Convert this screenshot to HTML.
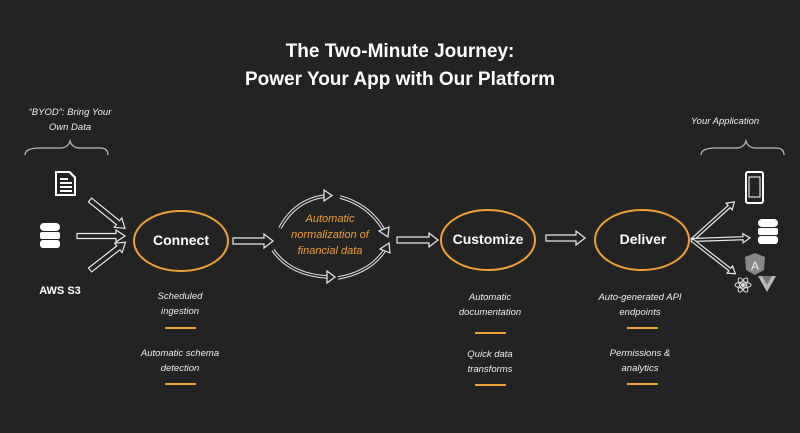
<!DOCTYPE html>
<html><head><meta charset="utf-8"><style>
html,body{margin:0;padding:0;background:#232323;}
body{width:800px;height:433px;position:relative;overflow:hidden;font-family:"Liberation Sans",sans-serif;color:#fff;}
.t{position:absolute;text-align:center;}
.title{left:0;width:800px;font-weight:bold;font-size:19px;line-height:28px;}
.lab{font-style:italic;font-size:9.5px;line-height:15px;color:#eee;}
.node{font-weight:bold;font-size:14px;}
.bar{position:absolute;height:2px;background:#f0a030;width:31px;}
</style></head><body>
<div class="t title" style="top:38px">The Two-Minute Journey:</div>
<div class="t title" style="top:66px">Power Your App with Our Platform</div>

<div class="t lab" style="left:10px;width:120px;top:105px">“BYOD”: Bring Your<br>Own Data</div>
<div class="t lab" style="left:660px;width:130px;top:114px">Your Application</div>
<div class="t" style="left:20px;width:80px;top:285px;font-weight:bold;font-size:11px">AWS S3</div>

<div class="t node" style="left:133px;width:96px;top:232px">Connect</div>
<div class="t node" style="left:440px;width:96px;top:231px">Customize</div>
<div class="t node" style="left:595px;width:96px;top:231px">Deliver</div>
<div class="t lab" style="left:280px;width:100px;top:211px;color:#f0a030;font-size:11px;line-height:16px">Automatic<br>normalization of<br>financial data</div>

<div class="t lab" style="left:130px;width:100px;top:289px">Scheduled<br>ingestion</div>
<div class="bar" style="left:165px;top:327px"></div>
<div class="t lab" style="left:120px;width:120px;top:346px">Automatic schema<br>detection</div>
<div class="bar" style="left:165px;top:383px"></div>
<div class="t lab" style="left:440px;width:100px;top:290px">Automatic<br>documentation</div>
<div class="bar" style="left:475px;top:332px"></div>
<div class="t lab" style="left:440px;width:100px;top:347px">Quick data<br>transforms</div>
<div class="bar" style="left:475px;top:384px"></div>
<div class="t lab" style="left:580px;width:120px;top:290px">Auto-generated API<br>endpoints</div>
<div class="bar" style="left:627px;top:327px"></div>
<div class="t lab" style="left:580px;width:120px;top:346px">Permissions &amp;<br>analytics</div>
<div class="bar" style="left:627px;top:383px"></div>

<svg width="800" height="433" style="position:absolute;left:0;top:0" fill="none" stroke="#ddd">
<defs>
<path id="a" d="M0,-2.5 L1,-2.5" />
</defs>
<!-- braces -->
<path d="M25,155 Q25,148 40,148 L60,148 Q68,148 70,141 Q72,148 80,148 L100,148 Q108,148 108,155" stroke="#bbb" stroke-width="1.3"/>
<path d="M701,155 Q701,148 716,148 L736,148 Q744,148 746,141 Q748,148 756,148 L776,148 Q784,148 784,155" stroke="#bbb" stroke-width="1.3"/>
<!-- ellipses -->
<ellipse cx="181" cy="241" rx="47" ry="30" stroke="#f0a030" stroke-width="2"/>
<ellipse cx="488" cy="240" rx="47" ry="30" stroke="#f0a030" stroke-width="2"/>
<ellipse cx="642" cy="240" rx="47" ry="30" stroke="#f0a030" stroke-width="2"/>
<g stroke="#e8e8e8" stroke-width="1.2" fill="#232323">
<!-- straight block arrows: shaft len L -->
<g transform="translate(90,200) rotate(39)"><path d="M0,-2.5 L36,-2.5 L36,-6 L45,0 L36,6 L36,2.5 L0,2.5Z"/></g>
<g transform="translate(77,236)"><path d="M0,-2.5 L39,-2.5 L39,-6 L48,0 L39,6 L39,2.5 L0,2.5Z"/></g>
<g transform="translate(90,270) rotate(-38)"><path d="M0,-2.5 L36,-2.5 L36,-6 L45,0 L36,6 L36,2.5 L0,2.5Z"/></g>
<g transform="translate(233,241)"><path d="M0,-3 L31,-3 L31,-7 L40,0 L31,7 L31,3 L0,3Z"/></g>
<g transform="translate(397,240)"><path d="M0,-3 L32,-3 L32,-7 L41,0 L32,7 L32,3 L0,3Z"/></g>
<g transform="translate(546,238)"><path d="M0,-3 L30,-3 L30,-7 L39,0 L30,7 L30,3 L0,3Z"/></g>
<g transform="translate(692,240) rotate(-42)"><path d="M0,-1.5 L50,-1.5 L50,-4.5 L57,0 L50,4.5 L50,1.5 L0,1.5Z"/></g>
<g transform="translate(692,240) rotate(-2)"><path d="M0,-1.5 L51,-1.5 L51,-4.5 L58,0 L51,4.5 L51,1.5 L0,1.5Z"/></g>
<g transform="translate(692,240) rotate(38)"><path d="M0,-1.5 L48,-1.5 L48,-4.5 L55,0 L48,4.5 L48,1.5 L0,1.5Z"/></g>
</g>
<!-- curved arrows -->
<g stroke="#e8e8e8" stroke-width="3.5"><path d="M280,228 Q295,200 325,196"/><path d="M340,197 Q370,205 385,232"/><path d="M273,250 Q290,275 328,277"/><path d="M338,278 Q372,272 386,248"/></g>
<g stroke="#232323" stroke-width="1.5"><path d="M280,228 Q295,200 325,196"/><path d="M340,197 Q370,205 385,232"/><path d="M273,250 Q290,275 328,277"/><path d="M338,278 Q372,272 386,248"/></g>
<g stroke="#e8e8e8" stroke-width="1.2" fill="#232323">
<path d="M324,190 L332,195.5 L324,201Z"/><path d="M379,231 L388,237 L389,227Z"/>
<path d="M327,271 L335,277 L327,283Z"/><path d="M380,249 L389,243 L390,253Z"/>
</g>
<!-- doc icon -->
<path d="M55,171 L70,171 L76,177 L76,196 L55,196Z" fill="#fff" stroke="none"/>
<path d="M57,173 L69,173 L74,178 L74,194 L57,194Z" fill="#232323" stroke="none"/>
<g fill="#fff" stroke="none"><rect x="60" y="178" width="8" height="2"/><rect x="60" y="182" width="12" height="2"/><rect x="60" y="186" width="12" height="2"/><rect x="60" y="190" width="12" height="2"/></g>
<!-- db icons -->
<g fill="#fff" stroke="none">
<rect x="40" y="223" width="20" height="8" rx="4"/><rect x="40" y="232" width="20" height="7" rx="2"/><rect x="40" y="240" width="20" height="8" rx="3"/>
<rect x="758" y="219" width="20" height="8" rx="4"/><rect x="758" y="228" width="20" height="7" rx="2"/><rect x="758" y="236" width="20" height="8" rx="3"/>
</g>
<!-- phone -->
<rect x="746" y="172" width="17" height="31" rx="2" stroke="#fff" stroke-width="2"/>
<rect x="749" y="177" width="11" height="20" stroke="#fff" stroke-width="1"/>
<!-- angular -->
<path d="M755,253 L765,257 L764,270 L755,275 L746,270 L745,257Z" fill="#888" stroke="none"/>
<text x="755" y="270" fill="#eee" stroke="none" font-size="12" font-family="Liberation Sans" text-anchor="middle">A</text>
<!-- vue -->
<path d="M758,276 L776,276 L767,292Z" fill="#bbb" stroke="none"/>
<path d="M762,276 L772,276 L767,285Z" fill="#777" stroke="none"/>
<!-- react -->
<g stroke="#ddd" stroke-width="1" transform="translate(743,285)">
<ellipse rx="8" ry="3"/><ellipse rx="8" ry="3" transform="rotate(60)"/><ellipse rx="8" ry="3" transform="rotate(-60)"/><circle r="1.5" fill="#ddd"/>
</g>
</svg>
</body></html>
